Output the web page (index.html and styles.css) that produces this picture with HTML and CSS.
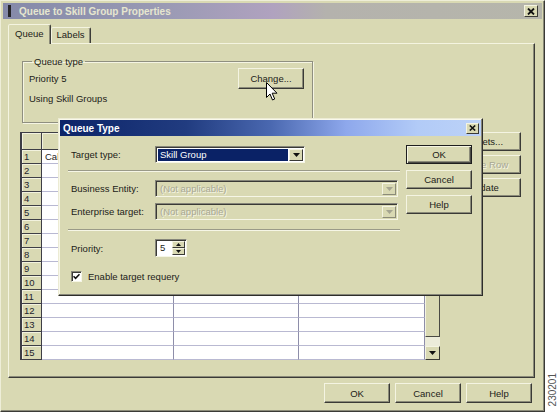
FILE: index.html
```html
<!DOCTYPE html>
<html>
<head>
<meta charset="utf-8">
<link rel="stylesheet" href="styles.css">
</head>
<body>
<div class="screen">
  <div class="window">
    <div class="titlebar">
      <span class="title-icon"></span>
      <span class="title-text">Queue to Skill Group Properties</span>
      <span class="close-btn"><svg width="8" height="7" viewBox="0 0 8 7"><path d="M1 0.5 L7 6.5 M7 0.5 L1 6.5" stroke="#111" stroke-width="1.8"/></svg></span>
    </div>
    <div class="tabs">
      <div class="tab active">Queue</div>
      <div class="tab">Labels</div>
    </div>
    <div class="panel">
      <fieldset class="group">
        <legend>Queue type</legend>
        <div class="group-row"><span>Priority 5</span><div class="btn change">Change...</div></div>
        <div class="group-row2">Using Skill Groups</div>
      </fieldset>
      <div class="grid-area">
        <div class="grid-frame">
          <div class="grid">
            <div class="gh"></div><div class="gh"></div><div class="gh"></div><div class="gh"></div>
            <div class="rh">1</div><div class="c">Cal</div><div class="c"></div><div class="c"></div>
            <div class="rh">2</div><div class="c"></div><div class="c"></div><div class="c"></div>
            <div class="rh">3</div><div class="c"></div><div class="c"></div><div class="c"></div>
            <div class="rh">4</div><div class="c"></div><div class="c"></div><div class="c"></div>
            <div class="rh">5</div><div class="c"></div><div class="c"></div><div class="c"></div>
            <div class="rh">6</div><div class="c"></div><div class="c"></div><div class="c"></div>
            <div class="rh">7</div><div class="c"></div><div class="c"></div><div class="c"></div>
            <div class="rh">8</div><div class="c"></div><div class="c"></div><div class="c"></div>
            <div class="rh">9</div><div class="c"></div><div class="c"></div><div class="c"></div>
            <div class="rh">10</div><div class="c"></div><div class="c"></div><div class="c"></div>
            <div class="rh">11</div><div class="c"></div><div class="c"></div><div class="c"></div>
            <div class="rh">12</div><div class="c"></div><div class="c"></div><div class="c"></div>
            <div class="rh">13</div><div class="c"></div><div class="c"></div><div class="c"></div>
            <div class="rh">14</div><div class="c"></div><div class="c"></div><div class="c"></div>
            <div class="rh">15</div><div class="c"></div><div class="c"></div><div class="c"></div>
          </div>
          <div class="vscroll">
            <div class="sb-btn"><svg width="7" height="4" viewBox="0 0 7 4"><polygon points="0,4 7,4 3.5,0" fill="#111"/></svg></div>
            <div class="sb-thumb"></div>
            <div class="sb-track"></div>
            <div class="sb-btn"><svg width="7" height="4" viewBox="0 0 7 4"><polygon points="0,0 7,0 3.5,4" fill="#111"/></svg></div>
          </div>
        </div>
        <div class="side-buttons">
          <div class="btn side-btn">Targets...</div>
          <div class="btn side-btn disabled">Delete Row</div>
          <div class="btn side-btn">Update</div>
        </div>
      </div>
    </div>
    <div class="footer">
      <div class="btn foot-btn">OK</div>
      <div class="btn foot-btn">Cancel</div>
      <div class="btn foot-btn">Help</div>
    </div>
  </div>
  <div class="side"><span class="fig-id">230201</span></div>

  <div class="dialog">
    <div class="dlg-title">
      <span class="dlg-title-text">Queue Type</span>
      <span class="dlg-close"><svg width="7" height="6" viewBox="0 0 7 6"><path d="M0.8 0.5 L6.2 5.5 M6.2 0.5 L0.8 5.5" stroke="#111" stroke-width="1.6"/></svg></span>
    </div>
    <div class="dlg-body">
      <div class="dlg-left">
        <div class="field-row">
          <span class="field-label">Target type:</span>
          <div class="combo active-combo">
            <span class="combo-value selected">Skill Group</span>
            <span class="combo-btn"><svg width="7" height="4" viewBox="0 0 7 4"><polygon points="0,0 7,0 3.5,4" fill="#111"/></svg></span>
          </div>
        </div>
        <div class="sep sep1"></div>
        <div class="field-row">
          <span class="field-label">Business Entity:</span>
          <div class="combo disabled-combo wide">
            <span class="combo-value">(Not applicable)</span>
            <span class="combo-btn"><svg width="7" height="4" viewBox="0 0 7 4"><polygon points="0,0 7,0 3.5,4" fill="#a4a490"/></svg></span>
          </div>
        </div>
        <div class="field-row row3">
          <span class="field-label">Enterprise target:</span>
          <div class="combo disabled-combo wide">
            <span class="combo-value">(Not applicable)</span>
            <span class="combo-btn"><svg width="7" height="4" viewBox="0 0 7 4"><polygon points="0,0 7,0 3.5,4" fill="#a4a490"/></svg></span>
          </div>
        </div>
        <div class="sep sep2"></div>
        <div class="field-row prio-row">
          <span class="field-label">Priority:</span>
          <div class="spinner">
            <span class="spin-value">5</span>
            <span class="spin-btns">
              <span class="spin-btn"><svg width="5" height="3" viewBox="0 0 5 3"><polygon points="0,3 5,3 2.5,0" fill="#111"/></svg></span>
              <span class="spin-btn"><svg width="5" height="3" viewBox="0 0 5 3"><polygon points="0,0 5,0 2.5,3" fill="#111"/></svg></span>
            </span>
          </div>
        </div>
        <div class="check-row">
          <span class="checkbox"><svg width="7" height="7" viewBox="0 0 7 7"><path d="M0.5 3.2 L2.6 5.3 L6.5 1.2" stroke="#111" stroke-width="1.6" fill="none"/></svg></span>
          <span class="check-label">Enable target requery</span>
        </div>
      </div>
      <div class="dlg-right">
        <div class="btn dlg-btn default">OK</div>
        <div class="btn dlg-btn">Cancel</div>
        <div class="btn dlg-btn">Help</div>
      </div>
    </div>
  </div>

  <svg class="cursor" width="12" height="20" viewBox="0 0 12 20">
    <path d="M0.5 0.5 L0.5 15.5 L4 12 L6.5 18 L8.7 17 L6.2 11.2 L11 11.2 Z" fill="#fff" stroke="#000" stroke-width="1"/>
  </svg>
</div>
</body>
</html>
```

FILE: styles.css
```css
* { box-sizing: border-box; }
html, body { margin: 0; padding: 0; background: #fff; }
body {
  font-family: "Liberation Sans", Arial, sans-serif;
  font-size: 9.5px;
  color: #1c1c18;
}
.screen {
  position: relative;
  display: flex;
  width: 560px;
  height: 420px;
  overflow: hidden;
}

/* ---------- main window ---------- */
.window {
  width: 545px;
  height: 412px;
  background: #d9d9b3;
  border: 1px solid;
  border-color: #eeeed8 #3a3a36 #3a3a36 #eeeed8;
  box-shadow: inset -1px -1px #8b8b79;
  padding: 2px;
  display: flex;
  flex-direction: column;
}
.titlebar {
  height: 16px;
  display: flex;
  align-items: center;
  padding-left: 5px;
  background: linear-gradient(90deg, #858aa9 0%, #9a9ab4 30%, #b0a2bf 50%, #b4b2ad 60%, #b6b6ab 100%);
}
.title-icon {
  width: 3px;
  height: 12px;
  background: #26262a;
}
.title-text {
  margin-left: 8px;
  font-weight: bold;
  font-size: 10px;
  color: #e6e6cf;
}
.close-btn {
  margin-left: auto;
  margin-right: 4px;
  width: 14px;
  height: 12px;
  background: #d9d9b3;
  border: 1px solid;
  border-color: #f4f4e2 #3a3a36 #3a3a36 #f4f4e2;
  display: flex;
  align-items: center;
  justify-content: center;
}

.tabs {
  display: flex;
  align-items: flex-end;
  height: 19px;
  margin: 5px 0 0 5px;
  position: relative;
  z-index: 1;
}
.tab {
  height: 16px;
  padding: 0 5px;
  line-height: 14px;
  border: 1px solid;
  border-bottom: none;
  border-color: #f4f4e0 #3c3c38 transparent #f4f4e0;
  border-radius: 2px 2px 0 0;
  box-shadow: inset -1px 0 #8b8b79;
  background: #d9d9b3;
}
.tab.active {
  height: 20px;
  margin-bottom: -1px;
  padding: 0 6px;
  line-height: 17px;
}

.panel {
  height: 335px;
  margin: 0 7px 0 5px;
  border: 1px solid;
  border-color: #f4f4e0 #3a3a36 #3a3a36 #f4f4e0;
  box-shadow: inset -1px -1px #8b8b79;
  padding: 0 0 0 11px;
  display: flex;
  flex-direction: column;
}

.group {
  margin: 12px 0 0 2px;
  padding: 0 8px 0 6px;
  width: 291px;
  height: 67px;
  border: 1px solid #8f8f80;
  box-shadow: inset 1px 1px #f5f5e3, 1px 1px #f5f5e3;
}
.group legend {
  padding: 0 2px;
  margin-left: 3px;
  line-height: 11px;
}
.group-row {
  display: flex;
  align-items: center;
  justify-content: space-between;
  margin-top: 1px;
}
.group-row2 {
  margin-top: 4px;
  line-height: 11px;
}

.btn {
  display: flex;
  align-items: center;
  justify-content: center;
  background: #d9d9b3;
  border: 1px solid;
  border-color: #f4f4e2 #3a3a36 #3a3a36 #f4f4e2;
  box-shadow: inset -1px -1px #8b8b79;
  color: #1c1c18;
}
.change {
  width: 66px;
  height: 21px;
}

.grid-area {
  display: flex;
  margin-top: 9px;
}
.grid-frame {
  display: flex;
  width: 420px;
  height: 228px;
}
.grid {
  display: grid;
  grid-template-columns: 20px 132px 125px 126px;
  grid-template-rows: 17px repeat(15, 14px);
  border-left: 2px solid #3e3e46;
  border-top: 1px solid #3e3e46;
  background: #fff;
  width: 405px;
}
.gh, .rh {
  background: #d9d9b3;
  border-right: 1px solid #3e3e46;
  border-bottom: 1px solid #3e3e46;
  box-shadow: inset 1px 1px #f2f2de;
}
.rh {
  padding-left: 2px;
  line-height: 13px;
  color: #24242c;
}
.c {
  border-right: 1px solid #8e8eaa;
  border-bottom: 1px solid #b9b9d2;
  padding-left: 3px;
  line-height: 13px;
  white-space: nowrap;
  overflow: hidden;
}
.vscroll {
  width: 15px;
  display: flex;
  flex-direction: column;
  background: #ececda;
}
.sb-btn {
  height: 14px;
  display: flex;
  align-items: center;
  justify-content: center;
  background: #d9d9b3;
  border: 1px solid;
  border-color: #f4f4e2 #3a3a36 #3a3a36 #f4f4e2;
}
.sb-thumb {
  flex: 1;
  background: #d9d9b3;
  border: 1px solid;
  border-color: #f4f4e2 #4a4a44 #4a4a44 #f4f4e2;
}
.sb-track { height: 9px; }

.side-buttons {
  display: flex;
  flex-direction: column;
  gap: 4px;
  margin-left: 6px;
}
.side-btn {
  width: 75px;
  height: 19px;
}
.btn.disabled {
  color: #a8a894;
  text-shadow: 1px 1px #f6f6e6;
}

.footer {
  display: flex;
  justify-content: flex-end;
  gap: 5px;
  margin-top: 5px;
  padding-right: 10px;
}
.foot-btn {
  width: 66px;
  height: 20px;
}

.side {
  flex: 1;
  display: flex;
  align-items: flex-end;
  justify-content: center;
  padding-bottom: 14px;
}
.fig-id {
  writing-mode: vertical-rl;
  transform: rotate(180deg);
  font-size: 10px;
  color: #555;
}

/* ---------- Queue Type dialog ---------- */
.dialog {
  position: absolute;
  left: 58px;
  top: 118px;
  width: 425px;
  height: 178px;
  background: #d9d9b3;
  border: 1px solid;
  border-color: #ecebd4 #2e2e2a #2e2e2a #ecebd4;
  box-shadow: inset -1px -1px #86867a, inset 1px 1px #f8f8ea;
  padding: 1px;
  z-index: 5;
}
.dlg-title {
  height: 16px;
  display: flex;
  align-items: center;
  padding-left: 3px;
  background: linear-gradient(90deg, #0c2468 0%, #213c80 30%, #4a68b0 50%, #8ea8ec 68%, #b2cbf7 85%, #bcd2f8 100%);
}
.dlg-title-text {
  font-weight: bold;
  font-size: 10px;
  color: #fff;
}
.dlg-close {
  margin-left: auto;
  margin-right: 2px;
  width: 13px;
  height: 11px;
  background: #d9d9b3;
  border: 1px solid;
  border-color: #f4f4e2 #3a3a36 #3a3a36 #f4f4e2;
  display: flex;
  align-items: center;
  justify-content: center;
}
.dlg-body {
  display: flex;
  padding: 10px 9px 0 8px;
}
.dlg-left {
  width: 332px;
  display: flex;
  flex-direction: column;
}
.field-row {
  display: flex;
  align-items: center;
  height: 17px;
}
.field-label {
  width: 87px;
  padding-left: 3px;
}
.combo {
  display: flex;
  width: 150px;
  height: 17px;
  border: 1px solid;
  border-color: #86867a #f6f6e6 #f6f6e6 #86867a;
  box-shadow: inset 1px 1px #3a3a36;
  padding: 2px 1px 1px 2px;
}
.combo.wide { width: 243px; }
.active-combo { background: #fff; }
.disabled-combo { background: #d9d9b3; }
.combo-value {
  flex: 1;
  padding-left: 2px;
  line-height: 12px;
  white-space: nowrap;
}
.combo-value.selected {
  background: #0a2266;
  color: #fff;
  margin-right: 1px;
}
.disabled-combo .combo-value {
  color: #a8a894;
  text-shadow: 1px 1px #f6f6e6;
}
.combo-btn {
  width: 14px;
  display: flex;
  align-items: center;
  justify-content: center;
  background: #d9d9b3;
  border: 1px solid;
  border-color: #f4f4e2 #3a3a36 #3a3a36 #f4f4e2;
}
.disabled-combo .combo-btn {
  border-color: #f4f4e2 #8b8b79 #8b8b79 #f4f4e2;
}
.sep {
  height: 2px;
  border-top: 1px solid #9a9a88;
  border-bottom: 1px solid #f6f6e6;
}
.sep1 { margin: 7px 0 8px; }
.row3 { margin-top: 6px; }
.sep2 { margin: 9px 0 8px; }
.prio-row { height: 18px; }
.spinner {
  display: flex;
  width: 32px;
  height: 18px;
  border: 1px solid;
  border-color: #86867a #f6f6e6 #f6f6e6 #86867a;
  box-shadow: inset 1px 1px #3a3a36;
  padding: 1px 1px 1px 1px;
  background: #fff;
}
.spin-value {
  flex: 1;
  padding-left: 3px;
  line-height: 14px;
}
.spin-btns {
  width: 13px;
  display: flex;
  flex-direction: column;
}
.spin-btn {
  flex: 1;
  display: flex;
  align-items: center;
  justify-content: center;
  background: #d9d9b3;
  border: 1px solid;
  border-color: #f4f4e2 #3a3a36 #3a3a36 #f4f4e2;
}
.check-row {
  display: flex;
  align-items: center;
  margin-top: 14px;
  padding-left: 3px;
}
.checkbox {
  width: 11px;
  height: 11px;
  background: #fff;
  border: 1px solid;
  border-color: #86867a #f6f6e6 #f6f6e6 #86867a;
  box-shadow: inset 1px 1px #3a3a36;
  display: flex;
  align-items: center;
  justify-content: center;
}
.check-label { margin-left: 6px; }
.dlg-right {
  display: flex;
  flex-direction: column;
  gap: 6px;
  margin-left: 6px;
  margin-top: -1px;
}
.dlg-btn {
  width: 66px;
  height: 19px;
}
.dlg-btn.default {
  border-color: #1e1e1e;
  box-shadow: inset 1px 1px #f4f4e2, inset -1px -1px #4a4a44, inset -2px -2px #8b8b79;
}

.cursor {
  position: absolute;
  left: 266px;
  top: 82px;
  z-index: 6;
}
```
